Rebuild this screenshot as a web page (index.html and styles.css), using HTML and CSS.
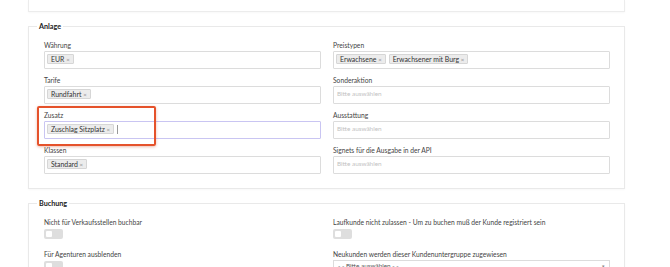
FILE: index.html
```html
<!DOCTYPE html>
<html lang="de">
<head>
  <meta charset="UTF-8" />
  <title>Anlage</title>
  <link rel="stylesheet" href="styles.css">
</head>
<body>
  <div class="page">
    <div class="card-top"></div>

    <fieldset class="group">
      <legend>Anlage</legend>
      <div class="grid">
        <div class="field">
          <label>Währung</label>
          <div class="select"><span class="tag">EUR <i>×</i></span></div>
        </div>
        <div class="field">
          <label>Preistypen</label>
          <div class="select"><span class="tag">Erwachsene <i>×</i></span><span class="tag">Erwachsener mit Burg <i>×</i></span></div>
        </div>
        <div class="field">
          <label>Tarife</label>
          <div class="select"><span class="tag">Rundfahrt <i>×</i></span></div>
        </div>
        <div class="field">
          <label>Sonderaktion</label>
          <div class="select"><span class="placeholder">Bitte auswählen</span></div>
        </div>
        <div class="field">
          <label>Zusatz</label>
          <div class="select focus"><span class="tag">Zuschlag Sitzplatz <i>×</i></span><span class="caret"></span></div>
        </div>
        <div class="field">
          <label>Ausstattung</label>
          <div class="select"><span class="placeholder">Bitte auswählen</span></div>
        </div>
        <div class="field">
          <label>Klassen</label>
          <div class="select"><span class="tag">Standard <i>×</i></span></div>
        </div>
        <div class="field">
          <label>Signets für die Ausgabe in der API</label>
          <div class="select"><span class="placeholder">Bitte auswählen</span></div>
        </div>
      </div>
    </fieldset>

    <fieldset class="group">
      <legend>Buchung</legend>
      <div class="grid switches">
        <div class="field">
          <label>Nicht für Verkaufsstellen buchbar</label>
          <span class="toggle"></span>
        </div>
        <div class="field">
          <label>Laufkunde nicht zulassen - Um zu buchen muß der Kunde registriert sein</label>
          <span class="toggle"></span>
        </div>
        <div class="field">
          <label>Für Agenturen ausblenden</label>
          <span class="toggle"></span>
        </div>
        <div class="field">
          <label>Neukunden werden dieser Kundenuntergruppe zugewiesen</label>
          <div class="dropdown">- - Bitte auswählen - -<span class="arrow">&#9662;</span></div>
        </div>
      </div>
    </fieldset>

    <div class="highlight"></div>
  </div>
</body>
</html>
```

FILE: styles.css
```css
* {
  box-sizing: border-box;
}

body {
  margin: 0;
  background: #fff;
  font-family: Lato, 'Noto Sans', sans-serif;
  color: #333;
  overflow: hidden;
}

.page {
  position: relative;
  width: 597px;
  margin-left: 28px;
}

.card-top {
  height: 12px;
  border: 1px solid #ececec;
  border-top: none;
  box-shadow: 0 1px 2px rgba(0,0,0,0.03);
}

.group {
  margin: 10px 0 0;
  padding: 10px 14px 14px 15px;
  border: 1px solid #e9e9e9;
  box-shadow: 0 1px 2px rgba(0,0,0,0.03);
}

.group legend {
  font-size: 7.2px;
  font-weight: 700;
  color: #222;
  padding: 0 2px;
  margin-left: -7px;
  line-height: 9px;
}

.grid {
  display: grid;
  grid-template-columns: 1fr 1fr;
  column-gap: 12px;
  row-gap: 7px;
}

.field label {
  display: block;
  font-size: 6.7px;
  line-height: 8px;
  color: #444;
  margin-bottom: 2px;
}

.select {
  height: 18px;
  border: 1px solid #dcdcdc;
  border-radius: 1px;
  padding: 2px 2px;
  display: flex;
  align-items: flex-start;
  gap: 3px;
}

.select.focus {
  border-color: #c9c5f2;
}

.tag {
  font-size: 6.9px;
  line-height: 8px;
  height: 10px;
  padding: 0 3px;
  background: #ececec;
  border: 1px solid #d6d6d6;
  border-radius: 1px;
  color: #333;
  white-space: nowrap;
}

.tag i {
  font-style: normal;
  color: #888;
  font-size: 6px;
}

.caret {
  width: 1px;
  height: 9px;
  margin-top: 1px;
  background: #999;
}

.placeholder {
  font-size: 6.4px;
  line-height: 9px;
  color: #c2c2c2;
  padding-left: 1px;
}

.switches {
  row-gap: 11px;
}

.switches label {
  margin-bottom: 3px;
}

.toggle {
  display: block;
  width: 19px;
  height: 10px;
  border-radius: 2px;
  background: #dedede;
  position: relative;
}

.toggle::before {
  content: "";
  position: absolute;
  left: 2px;
  top: 2px;
  width: 6px;
  height: 6px;
  border-radius: 1px;
  background: #fff;
}

.dropdown {
  height: 18px;
  margin-top: -1px;
  border: 1px solid #dcdcdc;
  font-size: 6.4px;
  line-height: 10px;
  padding: 0 4px;
  color: #555;
  position: relative;
}

.dropdown .arrow {
  position: absolute;
  right: 4px;
  top: 0;
  color: #888;
  font-size: 5px;
}

.highlight {
  position: absolute;
  left: 9px;
  top: 106px;
  width: 119px;
  height: 40px;
  border: 2.5px solid #e5522b;
  border-radius: 2px;
  box-shadow: 0 1px 3px rgba(200,60,20,0.35);
}
```
